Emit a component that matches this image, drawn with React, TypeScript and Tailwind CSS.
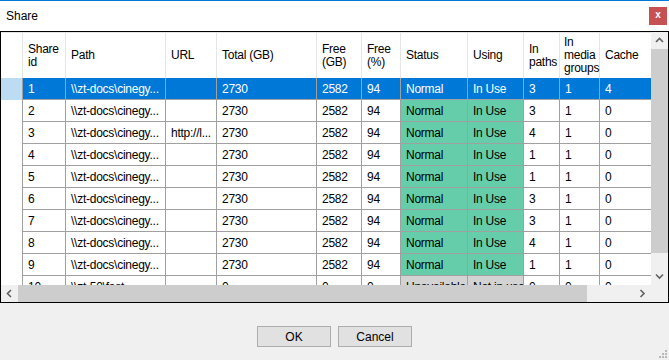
import React from "react";

type Row = {
  id: string;
  path: string;
  url: string;
  total: string;
  free: string;
  pct: string;
  status: string;
  using: string;
  inPaths: string;
  media: string;
  cache: string;
};

const paths = ["3", "3", "4", "1", "1", "3", "3", "4", "1"];
const rows: Row[] = paths.map((p, i) => ({
  id: String(i + 1),
  path: "\\\\zt-docs\\cinegy...",
  url: i === 2 ? "http://l..." : "",
  total: "2730",
  free: "2582",
  pct: "94",
  status: "Normal",
  using: "In Use",
  inPaths: p,
  media: "1",
  cache: i === 0 ? "4" : "0",
}));
rows.push({
  id: "10",
  path: "\\\\zt-50\\fast...",
  url: "",
  total: "0",
  free: "0",
  pct: "0",
  status: "Unavailable",
  using: "Not in use",
  inPaths: "0",
  media: "0",
  cache: "0",
});

const widths = ["w-[43px]", "w-[100px]", "w-[51px]", "w-[100px]", "w-[45px]", "w-[39px]", "w-[67px]", "w-[56px]", "w-[36px]", "w-[40px]", "w-[60px]"];

const headers: React.ReactNode[] = [
  <>Share<br />id</>,
  "Path",
  "URL",
  "Total (GB)",
  <>Free<br />(GB)</>,
  <>Free<br />(%)</>,
  "Status",
  "Using",
  <>In<br />paths</>,
  <>In<br />media<br />groups</>,
  "Cache",
];

function Chevron({ dir }: { dir: "up" | "down" | "left" | "right" }) {
  const pts = {
    up: "1,6 4.5,2.5 8,6",
    down: "1,2.5 4.5,6 8,2.5",
    left: "6,1 2.5,4.5 6,8",
    right: "2.5,1 6,4.5 2.5,8",
  }[dir];
  return (
    <svg width="9" height="9" viewBox="0 0 9 9">
      <polyline points={pts} fill="none" stroke="#606060" strokeWidth="1.6" />
    </svg>
  );
}

export default function App() {
  return (
    <div
      className="w-[669px] h-[360px] bg-[#f0f0f0] flex flex-col text-[12px] text-black overflow-hidden relative"
      style={{ fontFamily: '"Liberation Sans", Arial, sans-serif' }}
    >
      {/* Title bar */}
      <div className="h-[31px] bg-white border-t border-[#0078d7] flex items-center justify-between pl-[6px] pr-[2px]">
        <span className="text-[12px] leading-none">Share</span>
        <div className="w-[18px] h-[18px] bg-[#c75050] flex items-center justify-center text-white text-[10px] font-bold leading-none pb-[2px]">
          x
        </div>
      </div>

      {/* Grid */}
      <div className="h-[272px] border border-black bg-white flex flex-col">
        <div className="flex h-[253px]">
          <div className="flex-1 overflow-hidden flex flex-col tracking-[-0.25px]">
            {/* Header */}
            <div className="flex h-[46px] shrink-0 border-t border-[#e5e5e5]">
              <div className="w-[22px] shrink-0 border-r border-[#e5e5e5]" />
              {headers.map((h, i) => (
                <div
                  key={i}
                  className={`${widths[i]} shrink-0 border-r border-[#e5e5e5] flex items-center ${i === 9 ? "pl-[4px]" : "pl-[5px]"} leading-[13px] whitespace-nowrap`}
                >
                  <div>{h}</div>
                </div>
              ))}
            </div>
            {/* Rows */}
            {rows.map((r, ri) => {
              const sel = ri === 0;
              const unavailable = r.status === "Unavailable";
              const vals = [r.id, r.path, r.url, r.total, r.free, r.pct, r.status, r.using, r.inPaths, r.media, r.cache];
              return (
                <div key={ri} className="flex h-[22px] shrink-0">
                  <div className={`w-[22px] shrink-0 border-r border-[#a0a0a0] ${sel ? "bg-[#bcdcf4]" : "bg-white"}`} />
                  {vals.map((v, ci) => {
                    const colored = ci === 6 || ci === 7;
                    let bg = "bg-white";
                    if (sel) bg = "bg-[#0078d7] text-white";
                    else if (colored) bg = unavailable ? "bg-[#d3d3d3]" : "bg-[#66cdaa]";
                    return (
                      <div
                        key={ci}
                        className={`${widths[ci]} shrink-0 border-r border-b border-[#a0a0a0] ${bg} flex items-center pl-[5px] whitespace-nowrap overflow-hidden`}
                      >
                        {v}
                      </div>
                    );
                  })}
                </div>
              );
            })}
          </div>
          {/* Vertical scrollbar */}
          <div className="w-[17px] bg-[#f0f0f0] flex flex-col items-center">
            <div className="h-[17px] flex items-center justify-center">
              <Chevron dir="up" />
            </div>
            <div className="w-[17px] h-[204px] bg-[#cdcdcd]" />
            <div className="flex-1" />
            <div className="h-[17px] flex items-center justify-center">
              <Chevron dir="down" />
            </div>
          </div>
        </div>
        {/* Horizontal scrollbar */}
        <div className="flex h-[17px]">
          <div className="flex-1 bg-[#f0f0f0] flex items-center">
            <div className="w-[17px] h-[17px] flex items-center justify-center">
              <Chevron dir="left" />
            </div>
            <div className="w-[569px] h-[17px] bg-[#cdcdcd]" />
            <div className="flex-1" />
            <div className="w-[17px] h-[17px] flex items-center justify-center">
              <Chevron dir="right" />
            </div>
          </div>
          <div className="w-[17px] bg-[#f0f0f0]" />
        </div>
      </div>

      {/* Buttons */}
      <div className="flex justify-center gap-[7px] mt-[23px]">
        <button className="w-[74px] h-[21px] bg-[#e1e1e1] border border-[#adadad] text-[12px] leading-none flex items-center justify-center">
          OK
        </button>
        <button className="w-[74px] h-[21px] bg-[#e1e1e1] border border-[#adadad] text-[12px] leading-none flex items-center justify-center">
          Cancel
        </button>
      </div>

      {/* Resize grip */}
      <svg className="absolute right-[1px] bottom-[1px]" width="10" height="10" viewBox="0 0 10 10">
        {[
          [8, 2],
          [8, 5],
          [5, 5],
          [8, 8],
          [5, 8],
          [2, 8],
        ].map(([x, y], i) => (
          <rect key={i} x={x - 1} y={y - 1} width="2" height="2" fill="#b8b8b8" />
        ))}
      </svg>
    </div>
  );
}
